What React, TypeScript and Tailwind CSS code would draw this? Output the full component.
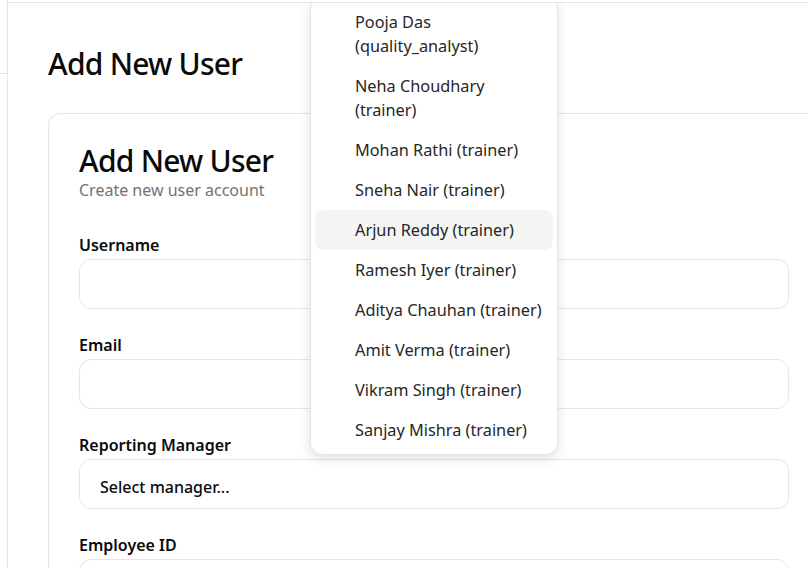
import React from "react";

const managers: { name: string; two?: boolean }[] = [
  { name: "Pooja Das (quality_analyst)", two: true },
  { name: "Neha Choudhary (trainer)", two: true },
  { name: "Mohan Rathi (trainer)" },
  { name: "Sneha Nair (trainer)" },
  { name: "Arjun Reddy (trainer)" },
  { name: "Ramesh Iyer (trainer)" },
  { name: "Aditya Chauhan (trainer)" },
  { name: "Amit Verma (trainer)" },
  { name: "Vikram Singh (trainer)" },
  { name: "Sanjay Mishra (trainer)" },
];

function Field({ label, children }: { label: string; children?: React.ReactNode }) {
  return (
    <div className="flex flex-col">
      <label className="text-base leading-5 mb-1 font-semibold text-[#0a0a0a]">{label}</label>
      <div className="h-[50px] rounded-xl border border-[#e5e5e5] bg-white flex items-center px-5 pt-[5px]">
        {children}
      </div>
    </div>
  );
}

export default function App() {
  return (
    <div
      className="w-[808px] h-[568px] overflow-hidden flex bg-white text-[#0a0a0a]"
      style={{ fontFamily: '"Noto Sans", "Open Sans", sans-serif' }}
    >
      <aside className="w-2 shrink-0 border-r border-[#e5e5e5]">
        <div className="h-[74px] border-b border-[#e5e5e5]" />
      </aside>
      <div className="flex-1 flex flex-col pt-[2px] min-w-0">
        <div className="relative flex-1 border-t border-[#e5e5e5] overflow-hidden">
          <div className="pl-10 pt-[43px] w-[820px]">
            <h1 className="text-3xl leading-9 font-medium tracking-[-0.025em] mb-[31px]">Add New User</h1>
            <div className="w-[772px] rounded-xl border border-[#e5e5e5] px-[30px] pt-[29px] pb-8">
              <div className="mb-[33px]">
                <h2 className="text-3xl leading-9 font-medium tracking-[-0.025em]">Add New User</h2>
                <p className="text-base leading-6 text-[#737373] -mt-[1px]">Create new user account</p>
              </div>
              <div className="flex flex-col gap-[26px]">
                <Field label="Username" />
                <Field label="Email" />
                <Field label="Reporting Manager">
                  <span className="text-base font-medium text-[#0a0a0a]">Select manager...</span>
                </Field>
                <Field label="Employee ID" />
              </div>
            </div>
          </div>

          <div className="absolute left-[302px] top-[-6px] w-[248px] rounded-xl border border-[#e5e5e5] bg-white p-1 shadow-[0_4px_12px_rgba(0,0,0,0.12)]">
            {managers.map((m) => (
              <div
                key={m.name}
                className={
                  "rounded-lg pl-10 pr-2 py-2 text-[16.3px] leading-6 text-[#262626] " +
                  (m.name.startsWith("Arjun") ? "bg-[#f5f5f4]" : "")
                }
              >
                {m.two ? (
                  <>
                    {m.name.split(" (")[0]}
                    <br />({m.name.split(" (")[1]}
                  </>
                ) : (
                  m.name
                )}
              </div>
            ))}
          </div>
        </div>
      </div>
    </div>
  );
}
